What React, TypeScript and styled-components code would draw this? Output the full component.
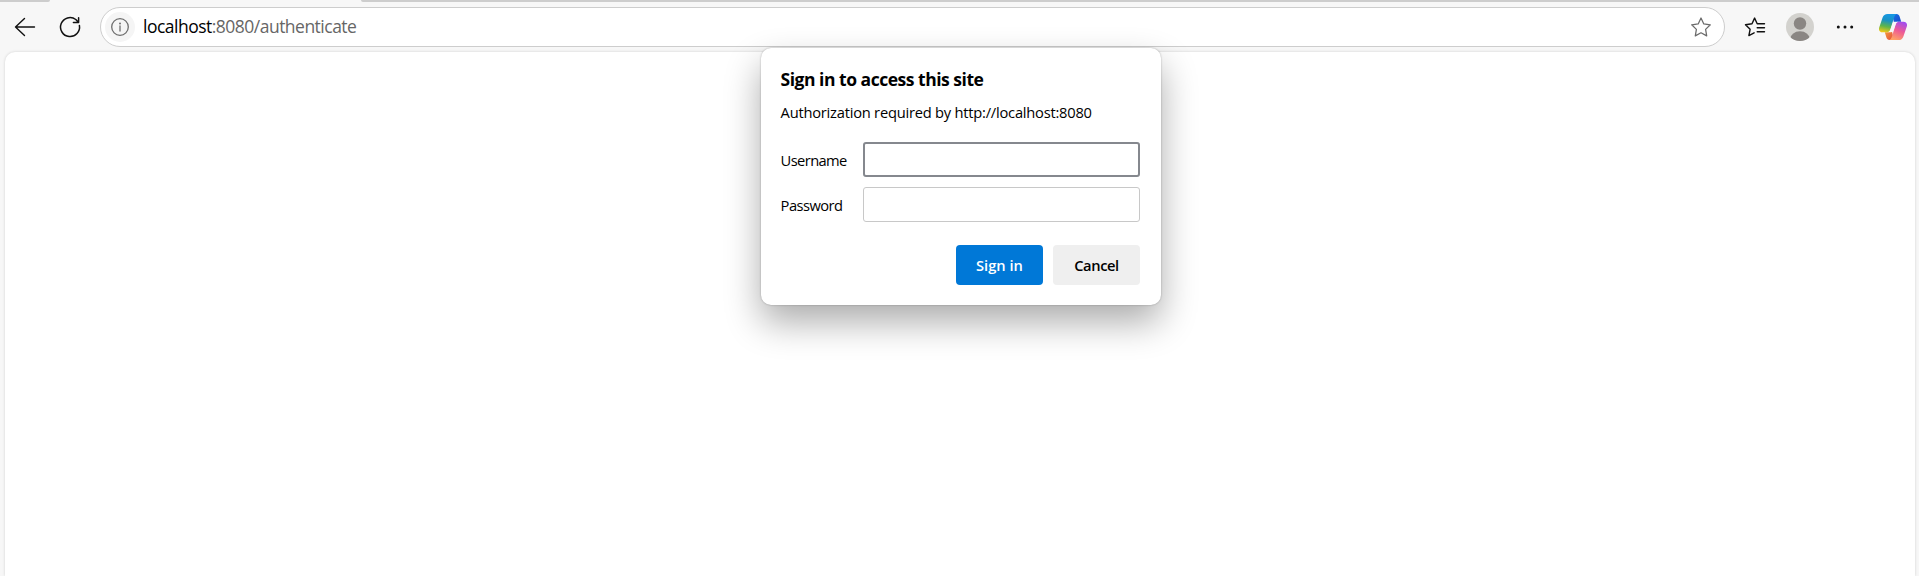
import React from 'react';
import styled, { createGlobalStyle, css } from 'styled-components';

const GlobalStyle = createGlobalStyle`
  *, *::before, *::after { box-sizing: border-box; }
  html, body, #root { margin: 0; height: 100%; }
  body {
    overflow: hidden;
    background: #f7f7f7;
    color: #000;
    font-family: 'Segoe UI', 'Open Sans', 'Noto Sans', sans-serif;
  }
`;

const Browser = styled.div`
  position: relative;
  display: flex;
  flex-direction: column;
  height: 100vh;
  overflow: hidden;
`;

const TabStrip = styled.div`
  display: flex;
  justify-content: space-between;
  flex: none;
  height: 1px;
`;

const TabEdge = styled.div<{ $side: 'left' | 'right' }>`
  height: 2px;
  background: #cdcdcd;
  ${(p) =>
    p.$side === 'left'
      ? css`width: 50px; border-bottom-right-radius: 2px;`
      : css`width: 1558px; border-bottom-left-radius: 2px;`}
`;

const Toolbar = styled.header`
  display: flex;
  align-items: center;
  flex: none;
  height: 51px;
  padding: 0 12px 0 13px;
`;

const IconButton = styled.button<{ $width?: number; $gap?: number }>`
  display: flex;
  align-items: center;
  justify-content: center;
  flex: none;
  width: ${(p) => p.$width ?? 24}px;
  height: 30px;
  margin: 0 0 0 ${(p) => p.$gap ?? 0}px;
  padding: 0;
  border: 0;
  background: none;
  svg { display: block; }
`;

const AddressBar = styled.div`
  display: flex;
  align-items: center;
  flex: 1;
  height: 40px;
  margin-left: 18px;
  padding: 0 10px 0 4px;
  border: 1px solid #cdcdcd;
  border-radius: 20px;
  background: #fff;
`;

const SiteInfo = styled.span`
  display: flex;
  align-items: center;
  justify-content: center;
  width: 30px;
  height: 30px;
  border-radius: 50%;
  background: #f5f5f5;
`;

const Url = styled.span`
  flex: 1;
  margin-left: 8px;
  padding-bottom: 1px;
  color: #666;
  font-size: 17.5px;
  line-height: 24px;
  letter-spacing: -0.51px;
  white-space: nowrap;
`;

const Host = styled.span`
  color: #000;
`;

const Page = styled.main`
  flex: 1;
  margin: 0 4px 0 5px;
  border-radius: 10px 10px 0 0;
  background: #fff;
  box-shadow: 0 0 3px rgba(0, 0, 0, 0.16);
`;

const Dialog = styled.form`
  position: absolute;
  top: 48px;
  left: 761px;
  width: 400px;
  height: 257px;
  padding: 19px 21px 20px 19.6px;
  border-radius: 10px;
  background: #fff;
  box-shadow: 0 0 2px rgba(0, 0, 0, 0.3), 0 17px 36px rgba(0, 0, 0, 0.33);
`;

const Title = styled.h1`
  margin: 0;
  font-size: 17.5px;
  font-weight: 700;
  line-height: 24px;
  letter-spacing: -0.48px;
  white-space: nowrap;
`;

const Message = styled.p`
  margin: 11px 0 20px;
  font-size: 14.7px;
  line-height: 20px;
  letter-spacing: -0.23px;
  white-space: nowrap;
`;

const Field = styled.label`
  display: flex;
  align-items: center;
  height: 35px;
  & + & { margin-top: 10px; }
`;

const FieldName = styled.span<{ $spacing: number }>`
  flex: none;
  width: 82.4px;
  padding-top: 1px;
  font-size: 14.7px;
  line-height: 20px;
  letter-spacing: ${(p) => p.$spacing}px;
`;

const Input = styled.input<{ $active?: boolean }>`
  flex: 1;
  min-width: 0;
  height: 35px;
  padding: 0 8px;
  outline: none;
  border: ${(p) => (p.$active ? '2px solid #85888e' : '1px solid #c8c8c8')};
  border-radius: 3px;
  background: #fff;
  font: inherit;
`;

const Actions = styled.div`
  display: flex;
  justify-content: flex-end;
  gap: 10px;
  margin-top: 23px;
`;

const Button = styled.button<{ $primary?: boolean }>`
  width: 87px;
  height: 40px;
  padding: 0 0 1px;
  border: 0;
  border-radius: 4px;
  background: ${(p) => (p.$primary ? '#0078d7' : '#efefef')};
  color: ${(p) => (p.$primary ? '#fff' : '#000')};
  font: 600 14.7px/20px 'Segoe UI', 'Open Sans', 'Noto Sans', sans-serif;
  letter-spacing: ${(p) => (p.$primary ? 0 : -0.4)}px;
`;

const BackIcon = () => (
  <svg width="24" height="24" viewBox="0 0 24 24" fill="none" stroke="#111" strokeWidth="1.4" strokeLinecap="round" strokeLinejoin="round">
    <path d="M21.5 12H2.5M11.5 3.5L2.5 12l9 8.5" />
  </svg>
);

const ReloadIcon = () => (
  <svg width="24" height="24" viewBox="0 0 24 24" fill="none" stroke="#111" strokeWidth="1.5" strokeLinecap="round" strokeLinejoin="round">
    <path d="M21.4 10.4A9.5 9.5 0 1 1 17.8 4.5L20.6 7.5M20.6 2.8V7.6H15.4" />
  </svg>
);

const InfoIcon = () => (
  <svg width="20" height="20" viewBox="0 0 20 20" fill="none" stroke="#6e6e6e" strokeWidth="1.3">
    <circle cx="10" cy="10" r="8.3" />
    <path d="M10 9v5" strokeLinecap="round" />
    <circle cx="10" cy="6.5" r="1" fill="#6e6e6e" stroke="none" />
  </svg>
);

const StarIcon = () => (
  <svg width="22" height="22" viewBox="0 0 22 22" fill="none" stroke="#6b6b6b" strokeWidth="1.25" strokeLinejoin="round">
    <path d="M11 2l2.8 5.9 6.5.9-4.7 4.6 1.1 6.5L11 16.8l-5.7 3.1 1.1-6.5L1.7 8.8l6.5-.9z" />
  </svg>
);

const FavoritesIcon = () => (
  <svg width="22" height="22" viewBox="0 0 22 22" fill="none" stroke="#111" strokeWidth="1.4" strokeLinecap="round" strokeLinejoin="round">
    <path d="M20.5 7.8H13.2L10.6 2.1 8 7.8l-6.5.9 4.6 4.6L4.9 19.6l5.2-2.8M13.2 11.7h7.3M13.2 15.7h7.3" />
  </svg>
);

const Avatar = () => (
  <svg width="28" height="28" viewBox="0 0 28 28">
    <defs>
      <clipPath id="avatar-disc"><circle cx="14" cy="14" r="14" /></clipPath>
    </defs>
    <g clipPath="url(#avatar-disc)">
      <rect width="28" height="28" fill="#d3d2ce" />
      <circle cx="14" cy="10.5" r="6.2" fill="#8a8683" />
      <ellipse cx="14" cy="26.5" rx="10" ry="8.3" fill="#8a8683" />
    </g>
  </svg>
);

const MoreIcon = () => (
  <svg width="18" height="6" viewBox="0 0 18 6" fill="#111">
    <circle cx="2.3" cy="3" r="1.5" />
    <circle cx="9" cy="3" r="1.5" />
    <circle cx="15.7" cy="3" r="1.5" />
  </svg>
);

const CopilotIcon = () => (
  <svg width="28" height="26" viewBox="0 0 28 26">
    <defs>
      <linearGradient id="cp-left" x1="0.5" y1="0" x2="0.3" y2="1">
        <stop offset="0" stopColor="#1798e4" />
        <stop offset="0.35" stopColor="#1a92c4" />
        <stop offset="0.68" stopColor="#5fb54a" />
        <stop offset="1" stopColor="#f2c918" />
      </linearGradient>
      <linearGradient id="cp-right" x1="0.75" y1="0" x2="0.35" y2="1">
        <stop offset="0" stopColor="#a04cf0" />
        <stop offset="0.5" stopColor="#ee5b95" />
        <stop offset="1" stopColor="#ffa365" />
      </linearGradient>
      <linearGradient id="cp-top" x1="0" y1="0" x2="1" y2="1">
        <stop offset="0" stopColor="#1b73e0" />
        <stop offset="1" stopColor="#1746cf" />
      </linearGradient>
      <linearGradient id="cp-bottom" x1="0" y1="0" x2="1" y2="1">
        <stop offset="0" stopColor="#f5a53a" />
        <stop offset="1" stopColor="#e2473f" />
      </linearGradient>
    </defs>
    <path d="M13 0h4.6c1.5 0 2.5 1 3 2.5l1.6 5.2h-3.4c-1.8 0-2.9.8-3.4 2.5z" fill="url(#cp-top)" />
    <path d="M15 26h-4.6c-1.5 0-2.5-1-3-2.5l-1.6-5.2h3.4c1.8 0 2.9-.8 3.4-2.5z" fill="url(#cp-bottom)" />
    <path d="M8.6 0H18c-1.7.4-2.3 1.6-2.9 3.4l-3.7 11.9c-.6 1.9-1.6 3-3.6 3H3.5c-2.7 0-4.1-2-3.3-4.8L3.6 3.6C4.4 1.2 6 0 8.6 0z" fill="url(#cp-left)" />
    <path d="M19.4 26H10c1.7-.4 2.3-1.6 2.9-3.4l3.7-11.9c.6-1.9 1.6-3 3.6-3h4.3c2.7 0 4.1 2 3.3 4.8l-3.4 9.9C23.6 24.8 22 26 19.4 26z" fill="url(#cp-right)" />
    <path d="M15.6 7.8h3.4c-1.5.4-2.1 1.3-2.5 2.7l-1.8 5.2c-.5 1.6-1.3 2.5-2.9 2.5H9.2c1.2-.4 1.8-1.3 2.2-2.5l1.9-5.2c.4-1.5.9-2.5 2.3-2.7z" fill="#f7f7f7" />
  </svg>
);

export default function App() {
  return (
    <>
      <GlobalStyle />
      <Browser>
        <TabStrip>
          <TabEdge $side="left" />
          <TabEdge $side="right" />
        </TabStrip>
        <Toolbar>
          <IconButton aria-label="Back"><BackIcon /></IconButton>
          <IconButton aria-label="Refresh" $gap={21}><ReloadIcon /></IconButton>
          <AddressBar>
            <SiteInfo><InfoIcon /></SiteInfo>
            <Url><Host>localhost</Host>:8080/authenticate</Url>
            <IconButton type="button" aria-label="Add to favorites" $width={26}><StarIcon /></IconButton>
          </AddressBar>
          <IconButton aria-label="Favorites" $width={22} $gap={19}><FavoritesIcon /></IconButton>
          <IconButton aria-label="Profile" $width={28} $gap={20}><Avatar /></IconButton>
          <IconButton aria-label="Settings and more" $width={18} $gap={22}><MoreIcon /></IconButton>
          <IconButton aria-label="Copilot" $width={28} $gap={25}><CopilotIcon /></IconButton>
        </Toolbar>
        <Page />
        <Dialog>
          <Title>Sign in to access this site</Title>
          <Message>Authorization required by http://localhost:8080</Message>
          <Field>
            <FieldName $spacing={-0.6}>Username</FieldName>
            <Input type="text" $active />
          </Field>
          <Field>
            <FieldName $spacing={-0.55}>Password</FieldName>
            <Input type="password" />
          </Field>
          <Actions>
            <Button type="button" $primary>Sign in</Button>
            <Button type="button">Cancel</Button>
          </Actions>
        </Dialog>
      </Browser>
    </>
  );
}
